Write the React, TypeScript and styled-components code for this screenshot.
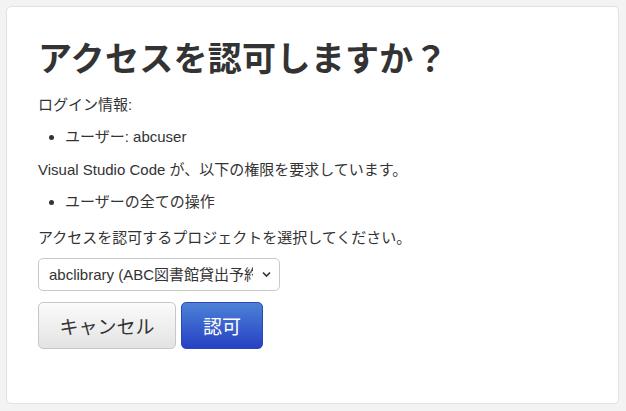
import React from "react";
import styled, { createGlobalStyle } from "styled-components";

const Global = createGlobalStyle`
  html, body { margin: 0; padding: 0; background: #f3f3f3; }
  body {
    font-family: "Liberation Sans", "Noto Sans CJK JP", sans-serif;
    color: #333;
  }
  * { box-sizing: border-box; }
`;

const Page = styled.div`
  padding: 6px 7px 7px 6px;
`;

const Card = styled.main`
  height: 398px;
  background: #fff;
  border: 1px solid #e2e2e2;
  border-radius: 5px;
  padding: 32px 31px;
  display: flex;
  flex-direction: column;
  align-items: flex-start;
`;

const Title = styled.h1`
  margin: 0 0 16px;
  font-size: 34px;
  line-height: 40px;
  font-weight: 700;
  color: #333;
  letter-spacing: 0.3px;
`;

const Text = styled.p<{ $gap?: number }>`
  margin: 0 0 ${(p) => p.$gap ?? 12}px;
  font-size: 15px;
  line-height: 20px;
`;

const List = styled.ul`
  margin: 0 0 13px;
  padding-left: 27px;
  font-size: 15px;
  line-height: 20px;
`;

const SelectWrap = styled.div`
  position: relative;
  width: 242px;
  margin-bottom: 11px;
`;

const Select = styled.select`
  appearance: none;
  -webkit-appearance: none;
  width: 100%;
  height: 33px;
  border: 1px solid #c9c9c9;
  border-radius: 5px;
  background: #fff;
  padding: 0 26px 0 10px;
  font-family: inherit;
  font-size: 15px;
  color: #333;
  outline: none;
`;

const Chevron = styled.svg`
  position: absolute;
  right: 9px;
  top: 13px;
  width: 9px;
  height: 7px;
  pointer-events: none;
`;

const Buttons = styled.div`
  display: flex;
  gap: 5px;
`;

const Button = styled.button<{ $primary?: boolean }>`
  height: 47px;
  padding: 0 20px;
  border-radius: 5px;
  font-family: inherit;
  font-size: 19px;
  cursor: pointer;
  border: 1px solid ${(p) => (p.$primary ? "#2b47b8" : "#c7c7c7")};
  color: ${(p) => (p.$primary ? "#fff" : "#333")};
  background: ${(p) =>
    p.$primary
      ? "linear-gradient(#4c82d6, #2740c4)"
      : "linear-gradient(#fbfbfb, #e3e3e3)"};
  width: ${(p) => (p.$primary ? "82px" : "138px")};
`;

export default function App() {
  return (
    <>
      <Global />
      <Page>
        <Card>
          <Title>アクセスを認可しますか？</Title>
          <Text>ログイン情報:</Text>
          <List>
            <li>ユーザー: abcuser</li>
          </List>
          <Text>Visual Studio Code が、以下の権限を要求しています。</Text>
          <List style={{ marginBottom: 16 }}>
            <li>ユーザーの全ての操作</li>
          </List>
          <Text $gap={10}>アクセスを認可するプロジェクトを選択してください。</Text>
          <SelectWrap>
            <Select defaultValue="abc">
              <option value="abc">abclibrary (ABC図書館貸出予約システム)</option>
            </Select>
            <Chevron viewBox="0 0 9 7">
              <path d="M1 1.5 L4.5 5 L8 1.5" fill="none" stroke="#333" strokeWidth="1.6" />
            </Chevron>
          </SelectWrap>
          <Buttons>
            <Button>キャンセル</Button>
            <Button $primary>認可</Button>
          </Buttons>
        </Card>
      </Page>
    </>
  );
}
